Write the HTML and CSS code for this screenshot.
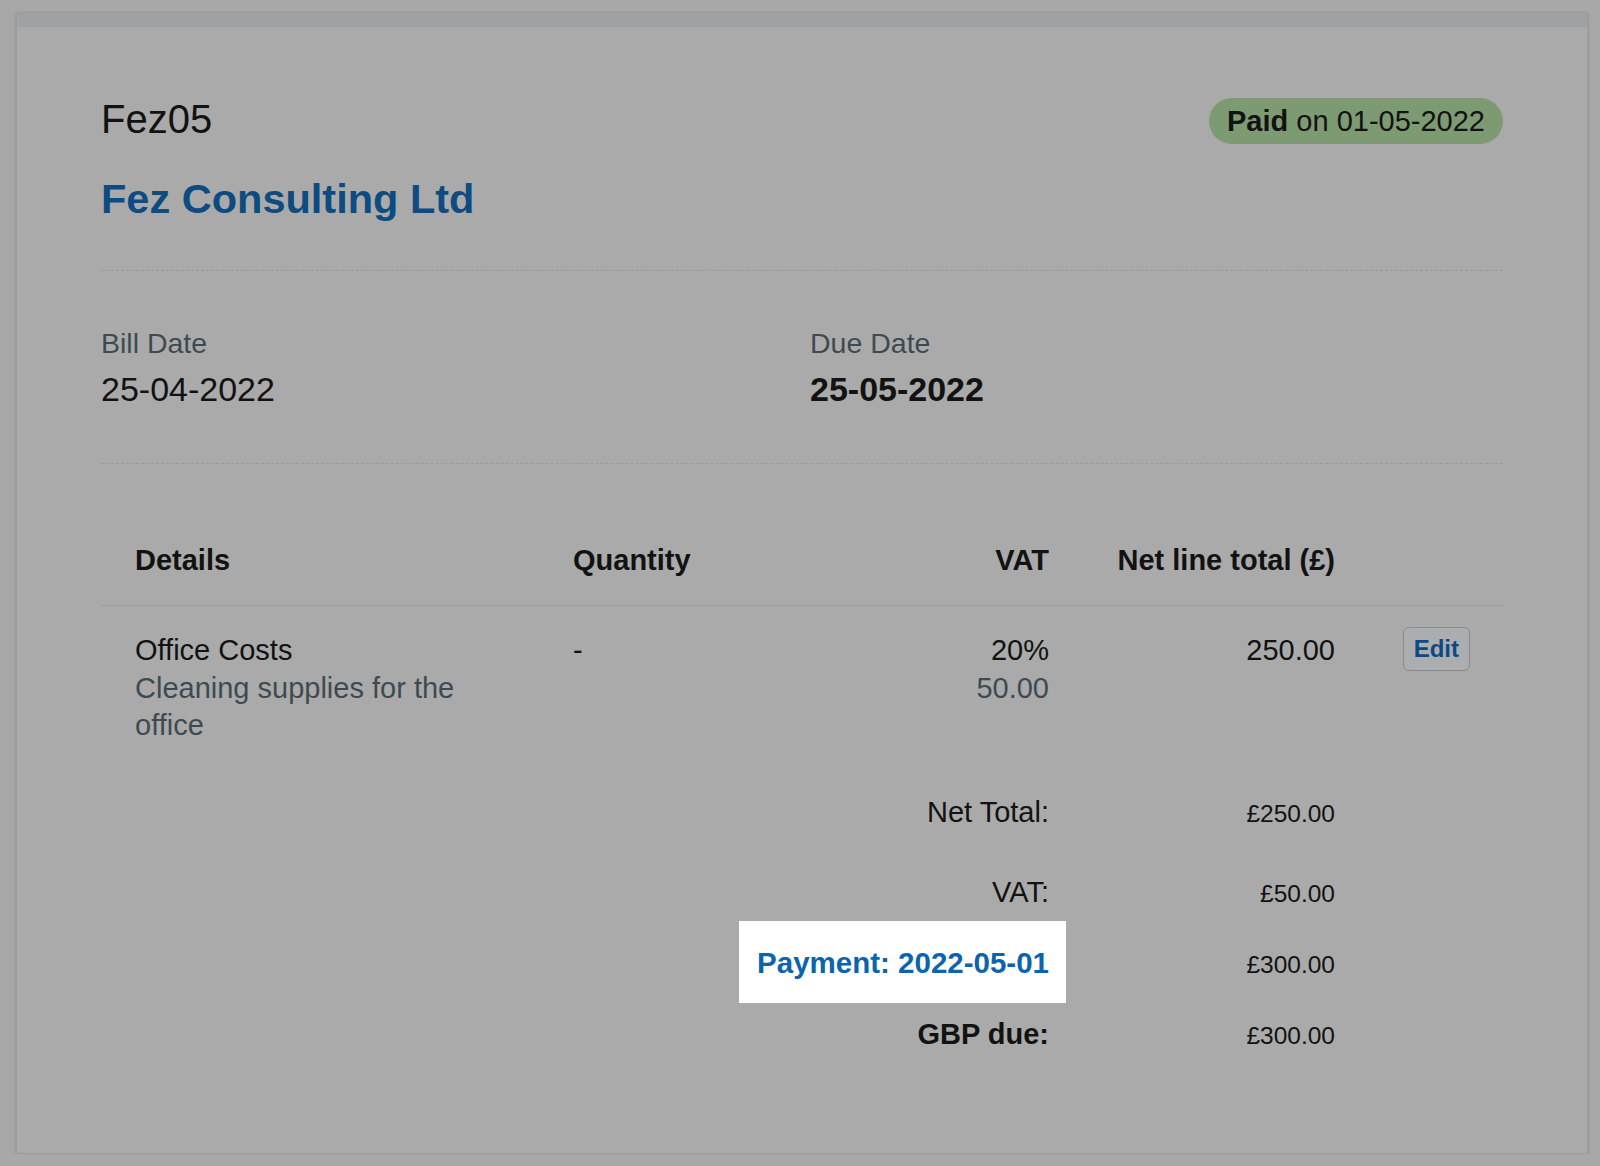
FILE: index.html
```html
<!DOCTYPE html>
<html lang="en">
  <head>
    <meta charset="UTF-8" />
    <meta name="viewport" content="width=device-width, initial-scale=1.0" />
    <title>Bill Fez05 - Fez Consulting Ltd</title>
    <link rel="stylesheet" href="styles.css">
  </head>
  <body>
    <div class="bill-card">
      <div class="card-bar"></div>
      <div class="bill-body">
        <!-- Reference + supplier -->
        <header class="bill-header">
          <div>
            <h1 class="bill-ref">Fez05</h1>
            <h2 class="supplier">Fez Consulting Ltd</h2>
          </div>
          <span class="status-pill"><strong>Paid</strong> on 01-05-2022</span>
        </header>

        <!-- Dates -->
        <div class="bill-dates">
          <div>
            <div class="date-label">Bill Date</div>
            <div class="date-value">25-04-2022</div>
          </div>
          <div>
            <div class="date-label">Due Date</div>
            <div class="date-value due">25-05-2022</div>
          </div>
        </div>

        <!-- Line items -->
        <div class="lines">
          <div class="line-row line-head">
            <div class="col-details">Details</div>
            <div>Quantity</div>
            <div class="num">VAT</div>
            <div class="num">Net line total (£)</div>
            <div></div>
          </div>
          <div class="line-row line-item">
            <div class="col-details">
              <div>Office Costs</div>
              <div class="muted desc">Cleaning supplies for the office</div>
            </div>
            <div>-</div>
            <div class="num">
              <div>20%</div>
              <div class="muted">50.00</div>
            </div>
            <div class="num">250.00</div>
            <div class="col-action"><button class="edit-btn">Edit</button></div>
          </div>
        </div>

        <!-- Totals -->
        <div class="totals">
          <div class="total-row first">
            <div class="total-label">Net Total:</div>
            <div class="total-amount">£250.00</div>
          </div>
          <div class="total-row">
            <div class="total-label">VAT:</div>
            <div class="total-amount">£50.00</div>
          </div>
          <div class="total-row">
            <div class="total-label"><a class="pay-link" href="#">Payment: 2022-05-01</a></div>
            <div class="total-amount">£300.00</div>
          </div>
          <div class="total-row">
            <div class="total-label strong">GBP due:</div>
            <div class="total-amount">£300.00</div>
          </div>
        </div>
      </div>
    </div>
  </body>
</html>
```

FILE: styles.css
```css
* {
  margin: 0;
  padding: 0;
  box-sizing: border-box;
  font-family: "Liberation Sans", Arial, sans-serif;
}

body {
  background: #a8a8a8;
  color: #121212;
  padding: 12px 0 0 16px;
}

.bill-card {
  width: 1572px;
  height: 1142px;
  background: #aaaaaa;
  border: 1px solid #9c9c9c;
  box-shadow: 0 1px 3px rgba(0, 0, 0, 0.18);
}

.card-bar {
  height: 14px;
  background: #9fa1a3;
}

.bill-body {
  padding: 68px 84px 0;
}

/* Header */
.bill-header {
  display: flex;
  justify-content: space-between;
  align-items: flex-start;
}

.bill-ref {
  font-size: 40px;
  line-height: 48px;
  font-weight: normal;
}

.supplier {
  margin-top: 32px;
  font-size: 41.5px;
  line-height: 48px;
  font-weight: bold;
  color: #0e4b80;
}

.status-pill {
  margin-top: 3px;
  height: 46px;
  padding: 0 18px;
  border-radius: 23px;
  background: #7e9a72;
  font-size: 29px;
  line-height: 46px;
  white-space: nowrap;
}

/* Dates */
.bill-dates {
  display: grid;
  grid-template-columns: 709px 1fr;
  margin-top: 47px;
  padding: 55px 0 54px;
  border-top: 1px dashed #969b9e;
  border-bottom: 1px dashed #969b9e;
}

.date-label {
  font-size: 28.5px;
  line-height: 34px;
  color: #3e4a52;
}

.date-value {
  margin-top: 9px;
  font-size: 34px;
  line-height: 40px;
}

.date-value.due {
  font-weight: bold;
}

/* Line items */
.lines {
  margin-top: 78px;
}

.line-row {
  display: grid;
  grid-template-columns: 472px 228px 248px 286px 1fr;
  align-items: start;
  font-size: 29px;
}

.line-head {
  line-height: 36px;
  font-weight: bold;
  padding-bottom: 27px;
  border-bottom: 1px solid #979c9f;
}

.line-item {
  line-height: 37.5px;
  padding: 26px 0 32px;
}

.col-details {
  padding-left: 34px;
}

.desc {
  max-width: 340px;
}

.num {
  text-align: right;
}

.muted {
  color: #3e4a52;
}

.col-action {
  display: flex;
  justify-content: flex-end;
  padding-right: 33px;
}

.edit-btn {
  margin-top: -5.5px;
  height: 44px;
  padding: 0 10px;
  border: 1px solid #878c90;
  border-radius: 6px;
  background: #acadae;
  color: #0c4a85;
  font-size: 24px;
  font-weight: bold;
  line-height: 42px;
  cursor: pointer;
}

/* Totals */
.total-row {
  display: grid;
  grid-template-columns: 948px 286px 1fr;
  align-items: baseline;
  padding: 17.5px 0;
}

.total-row.first {
  margin-bottom: 9px;
}

.total-label {
  text-align: right;
  font-size: 29px;
  line-height: 36px;
}

.total-label.strong {
  font-weight: bold;
}

.total-amount {
  text-align: right;
  font-size: 24.5px;
}

.pay-link {
  position: relative;
  z-index: 0;
  display: inline-block;
  color: #0b64ac;
  font-size: 29.5px;
  font-weight: bold;
  text-decoration: none;
}

.pay-link::before {
  content: "";
  position: absolute;
  top: -24.5px;
  bottom: -21.5px;
  left: -18px;
  right: -17px;
  background: #ffffff;
  z-index: -1;
}
```
